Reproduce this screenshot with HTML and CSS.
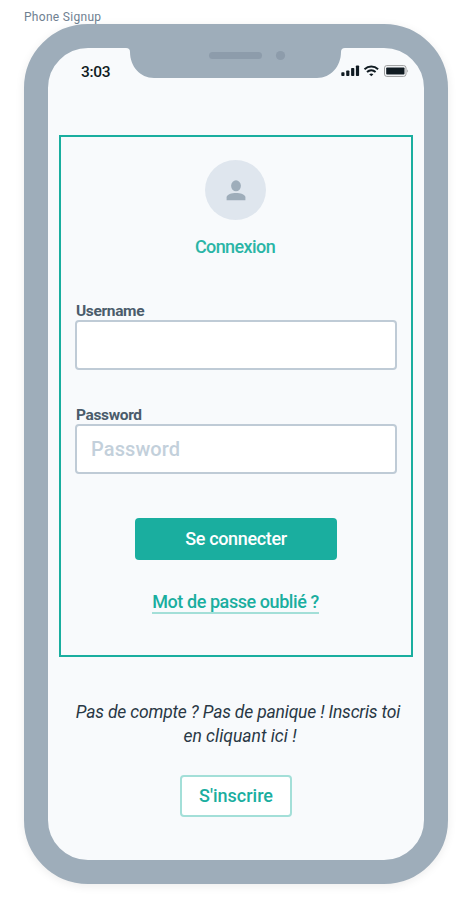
FILE: index.html
```html
<!DOCTYPE html>
<html lang="fr">
<head>
<meta charset="utf-8">
<title>Phone Signup</title>
<link rel="stylesheet" href="styles.css">
</head>
<body>
<div class="frame-label"><span>Phone Signup</span></div>
<main class="phone">
  <svg class="notch" width="219" height="30" viewBox="0 0 219 30" aria-hidden="true">
    <path fill="#9eadba" d="M0 0H219Q215 0 215 4C215 18 205 30 191 30H28C14 30 4 18 4 4Q4 0 0 0Z"/>
    <rect x="83" y="4" width="53" height="7" rx="3.500" fill="#8d9cab"/>
    <circle cx="154.500" cy="7.500" r="4.600" fill="#8d9cab"/>
  </svg>
  <header class="status">
    <span class="time">3:03</span>
    <svg width="68" height="12" viewBox="0 0 68 12" aria-hidden="true">
      <g fill="#101b22">
        <rect x="0.300" y="7.300" width="3.200" height="3.700" rx=".8"/>
        <rect x="5.200" y="5.500" width="3.200" height="5.500" rx=".8"/>
        <rect x="10.100" y="3" width="3.200" height="8" rx=".8"/>
        <rect x="14.900" y=".5" width="3.200" height="10.500" rx=".8"/>
        <path d="M28.200 9.200Q30.300 7.600 32.400 9.200L30.300 11.200Z"/>
        <rect x="45.200" y="2.500" width="18.300" height="7" rx=".8"/>
      </g>
      <path d="M23.500 4.200C27.500 .6 33.100 .6 37.100 4.200M26 6.900C28.500 4.800 32.100 4.800 34.600 6.900" fill="none" stroke="#101b22" stroke-width="2"/>
      <rect x="43.500" y=".6" width="21.500" height="10.800" rx="2.300" fill="none" stroke="#9a9b9c"/>
      <path d="M66.200 4.200Q68 6 66.200 7.800Z" fill="#9a9b9c"/>
    </svg>
  </header>
  <form class="card">
    <div class="avatar">
      <svg width="20" height="21" viewBox="0 0 20 21" aria-hidden="true">
        <ellipse cx="10" cy="5.800" rx="4.900" ry="5.500" fill="#9eadba"/>
        <path d="M.6 20.200V17.600C.6 14.300 5.800 13.100 10 13.100S19.400 14.300 19.400 17.600V20.200Z" fill="#9eadba"/>
      </svg>
    </div>
    <h1 class="title">Connexion</h1>
    <label class="label" for="user">Username</label>
    <input class="input" id="user" type="text">
    <label class="label second" for="pass">Password</label>
    <input class="input" id="pass" type="password" placeholder="Password">
    <button class="submit" type="button">Se connecter</button>
    <a class="forgot">Mot de passe oublié ?</a>
  </form>
  <p class="invite"><span class="line-one">Pas de compte ? Pas de panique ! Inscris toi</span><br><span class="line-two">en cliquant ici !</span></p>
  <button class="signup" type="button">S'inscrire</button>
</main>
</body>
</html>
```
FILE: styles.css
```css
* { box-sizing: border-box; }
body {
  margin: 0;
  padding: 0 24px;
  height: 908px;
  overflow: hidden;
  background: #fff;
  font-family: Roboto, "Liberation Sans", sans-serif;
  font-weight: 500;
}
.frame-label {
  height: 24px;
  padding-top: 9px;
  font-size: 12px;
  line-height: 16px;
  font-weight: 400;
  letter-spacing: .3px;
  color: #6f8091;
}
.phone {
  position: relative;
  display: flex;
  flex-direction: column;
  align-items: center;
  width: 424px;
  height: 860px;
  border: 24px solid #9eadba;
  border-radius: 64px;
  background: #f8fafc;
  box-shadow: 0 2px 10px rgba(0, 0, 0, .08);
}
.notch { position: absolute; top: 0; left: 78px; }
.status {
  display: flex;
  justify-content: space-between;
  align-items: center;
  width: 100%;
  height: 46px;
  padding: 0 15px 0 33px;
  margin-bottom: 41px;
}
.time { padding-top: 2px; font-size: 15.5px; color: #101b22; letter-spacing: -.35px; }
.card {
  display: flex;
  flex-direction: column;
  align-items: center;
  width: 354px;
  height: 522px;
  padding: 23px 14px 0;
  border: 2px solid #1aae9f;
}
.avatar {
  display: flex;
  align-items: center;
  justify-content: center;
  width: 61px;
  height: 60px;
  margin-right: 1px;
  border-radius: 50%;
  background: #dfe6ee;
}
.title {
  margin: 15px 2px 0 0;
  font-size: 18px;
  line-height: 24px;
  font-weight: 500;
  letter-spacing: -.6px;
  color: #2ab5a6;
}
.label {
  align-self: flex-start;
  margin-top: 43px;
  padding: 1px 0 0 1px;
  font-size: 15.5px;
  line-height: 17px;
  font-weight: 700;
  letter-spacing: -.35px;
  color: #4b5c6b;
}
.second { margin-top: 36px; }
.input {
  width: 322px;
  height: 50px;
  padding: 0 14px;
  border: 2px solid #bfcbd6;
  border-radius: 4px;
  background: #fff;
  font: 500 20px Roboto, sans-serif;
  letter-spacing: .1px;
}
.input::placeholder { color: #c3d0db; opacity: 1; }
.submit, .signup {
  padding: 0;
  border: 0;
  border-radius: 4px;
  font: 500 18px/24px Roboto, sans-serif;
}
.submit {
  width: 202px;
  height: 42px;
  margin-top: 44px;
  background: #1aae9f;
  color: #fff;
  letter-spacing: -.35px;
}
.forgot {
  width: 167px;
  height: 24px;
  margin: 30px 1px 0 0;
  border-bottom: 2px solid #a3dfd8;
  font-size: 18px;
  line-height: 24px;
  letter-spacing: -.43px;
  text-align: center;
  white-space: nowrap;
  color: #1aae9f;
}
.invite {
  width: 340px;
  margin: 43px 0 0 4px;
  font-size: 17.5px;
  line-height: 24px;
  font-style: italic;
  font-weight: 400;
  text-align: center;
  white-space: nowrap;
  color: #293845;
}
.line-one { letter-spacing: -.19px; }
.line-two { padding-left: 4px; }
.signup {
  width: 112px;
  height: 42px;
  margin-top: 27px;
  border: 2px solid #a3dfd8;
  background: #fff;
  color: #1aae9f;
}
```
